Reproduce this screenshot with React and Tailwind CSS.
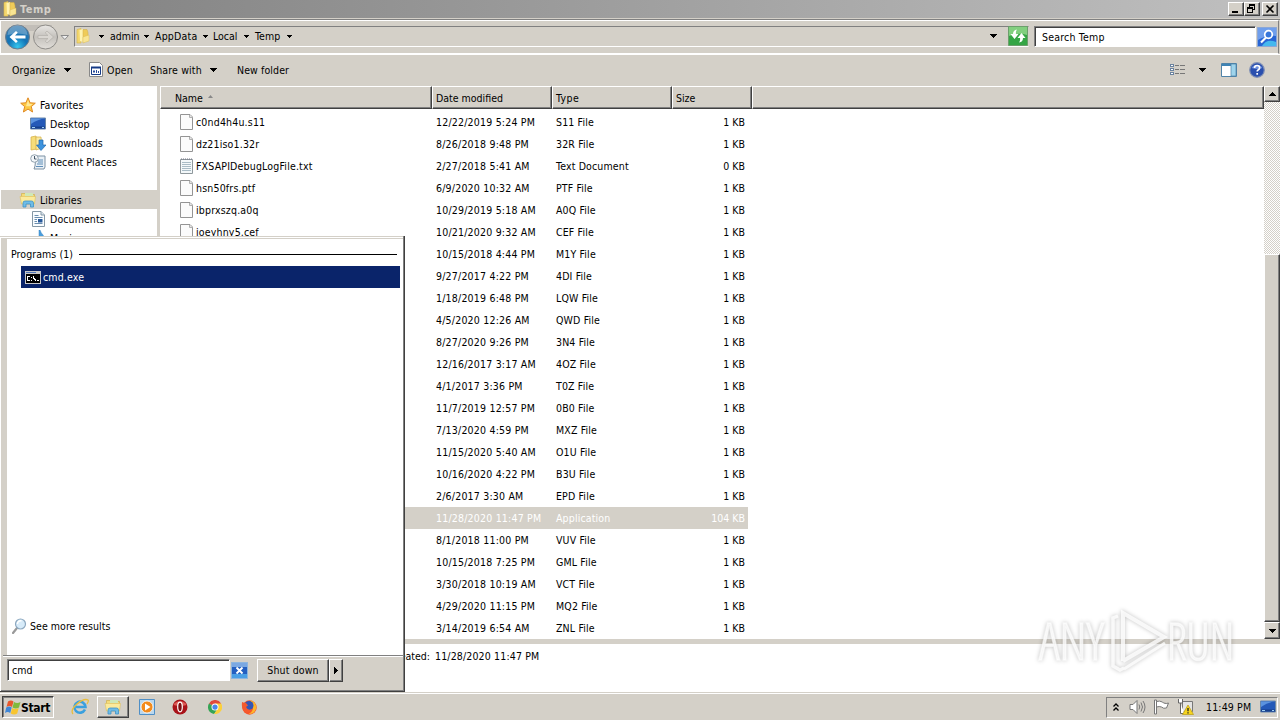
import clsx from "clsx";

const files = [
  ["c0nd4h4u.s11", "12/22/2019 5:24 PM", "S11 File", "1 KB"],
  ["dz21iso1.32r", "8/26/2018 9:48 PM", "32R File", "1 KB"],
  ["FXSAPIDebugLogFile.txt", "2/27/2018 5:41 AM", "Text Document", "0 KB"],
  ["hsn50frs.ptf", "6/9/2020 10:32 AM", "PTF File", "1 KB"],
  ["ibprxszq.a0q", "10/29/2019 5:18 AM", "A0Q File", "1 KB"],
  ["joeyhny5.cef", "10/21/2020 9:32 AM", "CEF File", "1 KB"],
  ["", "10/15/2018 4:44 PM", "M1Y File", "1 KB"],
  ["", "9/27/2017 4:22 PM", "4DI File", "1 KB"],
  ["", "1/18/2019 6:48 PM", "LQW File", "1 KB"],
  ["", "4/5/2020 12:26 AM", "QWD File", "1 KB"],
  ["", "8/27/2020 9:26 PM", "3N4 File", "1 KB"],
  ["", "12/16/2017 3:17 AM", "4OZ File", "1 KB"],
  ["", "4/1/2017 3:36 PM", "T0Z File", "1 KB"],
  ["", "11/7/2019 12:57 PM", "0B0 File", "1 KB"],
  ["", "7/13/2020 4:59 PM", "MXZ File", "1 KB"],
  ["", "11/15/2020 5:40 AM", "O1U File", "1 KB"],
  ["", "10/16/2020 4:22 PM", "B3U File", "1 KB"],
  ["", "2/6/2017 3:30 AM", "EPD File", "1 KB"],
  ["", "11/28/2020 11:47 PM", "Application", "104 KB"],
  ["", "8/1/2018 11:00 PM", "VUV File", "1 KB"],
  ["", "10/15/2018 7:25 PM", "GML File", "1 KB"],
  ["", "3/30/2018 10:19 AM", "VCT File", "1 KB"],
  ["", "4/29/2020 11:15 PM", "MQ2 File", "1 KB"],
  ["", "3/14/2019 6:54 AM", "ZNL File", "1 KB"],
];

const raised =
  "bg-[#d4d0c8] border border-t-white border-l-white border-r-[#404040] border-b-[#404040] shadow-[inset_-1px_-1px_0_#808080]";
const sunken =
  "border border-t-[#808080] border-l-[#808080] border-r-white border-b-white shadow-[inset_1px_1px_0_#404040]";

function Caret({ className }) {
  return (
    <svg width="7" height="4" viewBox="0 0 7 4" shapeRendering="crispEdges" className={clsx("shrink-0", className)}>
      <path d="M0 0h7L3.5 4z" />
    </svg>
  );
}

function SmallCaret({ className }) {
  return (
    <svg width="5" height="3" viewBox="0 0 5 3" shapeRendering="crispEdges" className={clsx("shrink-0", className)}>
      <path d="M0 0h5v1h-1v1h-1v1h-1v-1h-1v-1h-1z" />
    </svg>
  );
}

function FolderIcon() {
  return (
    <svg width="16" height="16" viewBox="0 0 16 16" className="shrink-0">
      <path d="M2 1.500l4-1V15H2z" fill="#f3d76e" stroke="#d8b548" strokeWidth=".6" />
      <path d="M4.500 2l3.500-1 1 8-1 5-3-1z" fill="#fff3b0" />
      <path d="M8 1.500h4l1 3v8l-5 2z" fill="#efcb58" stroke="#d0aa45" strokeWidth=".5" />
      <path d="M8 9l6-2v6l-6 2z" fill="#f9e593" stroke="#d9b954" strokeWidth=".4" />
    </svg>
  );
}

function LibraryIcon({ className }) {
  return (
    <svg width="18" height="16" viewBox="0 0 18 16" className={clsx("shrink-0", className)}>
      <path d="M2.500 1.500h4l1 1h8v9h-13z" fill="#f4db78" stroke="#d0b04d" strokeWidth=".7" />
      <path d="M6 1h8v3H6z" fill="#cfe8b8" />
      <path d="M1 4.500h15.500l-1 7.500h-13z" fill="#fbea9c" stroke="#dcbf60" strokeWidth=".6" />
      <path d="M4 15v-4q0-2 2-2h6.500q2 0 2 2v4h-3v-3H7v3z" fill="#6fbce6" stroke="#3f93c6" strokeWidth=".8" />
    </svg>
  );
}

function FileIcon({ lines }) {
  return (
    <svg width="14" height="16" viewBox="0 0 14 16" className="shrink-0">
      {lines ? (
        <>
          <path d="M.5 1.500h12v14H.5z" fill="#f3f8fa" stroke="#8f989c" />
          <path d="M2 4.500h9M2 6.500h9M2 8.500h9M2 10.500h9M2 12.500h9" stroke="#a9bcc6" />
          <path d="M1 1h11" stroke="#778" strokeDasharray="1 1" />
        </>
      ) : (
        <>
          <path d="M.5.5h9.500l2.500 2.500v12.500H.5z" fill="#fbfbfb" stroke="#949494" />
          <path d="M9.500 1v2.500h3" fill="#e6e6e6" stroke="#b0b0b0" />
        </>
      )}
    </svg>
  );
}

function StarIcon() {
  return (
    <svg width="16" height="16" viewBox="0 0 16 16">
      <path d="M8 .8l2.100 5 5.200.4-4 3.400 1.300 5.400L8 12.100 3.400 15l1.300-5.400-4-3.400 5.200-.4z" fill="#fdc843" stroke="#e08a24" />
      <path d="M8 3l1.300 3.700 3.500.3-3 2.200H6z" fill="#ffe998" />
    </svg>
  );
}

function DesktopIcon({ className }) {
  return (
    <svg width="16" height="14" viewBox="0 0 16 14" className={clsx("shrink-0", className)}>
      <path d="M.5 1h15v11H.5z" fill="#2459b8" stroke="#6a87a8" />
      <path d="M1 7q7-5 14-5.500V1.500H1z" fill="#5b93df" />
      <path d="M1 9.500h14v2H1z" fill="#163f8a" />
      <path d="M2 10.500h3M12 10.500h2" stroke="#9fd0f5" />
    </svg>
  );
}

function DownloadsIcon() {
  return (
    <svg width="16" height="16" viewBox="0 0 16 16">
      <path d="M1 2l5-1 1 13-6 1z" fill="#f6dd7a" stroke="#d3ad43" strokeWidth=".7" />
      <path d="M6 2h5l1 11-6 2z" fill="#fbeaa0" stroke="#d3ad43" strokeWidth=".7" />
      <path d="M9 5h4v5h3l-5 5.500L6.500 10H9z" fill="#3d93de" stroke="#2067ad" strokeWidth=".7" />
    </svg>
  );
}

function RecentIcon() {
  return (
    <svg width="16" height="16" viewBox="0 0 16 16">
      <path d="M6 2h9v11l-1 2H4l1-3z" fill="#e9f0f6" stroke="#7d91a3" />
      <path d="M8 6h5M8 8h5M7 10h6M6 12.500h7" stroke="#5f8eb8" />
      <circle cx="4.500" cy="4.500" r="3.800" fill="#f3f7fa" stroke="#92a2ae" />
      <path d="M4.500 2v3h2" fill="none" stroke="#456" />
    </svg>
  );
}

function DocumentIcon() {
  return (
    <svg width="16" height="16" viewBox="-1.500 0 16 16">
      <path d="M1 .5h8.500l3.500 3.500v11.500H1z" fill="#fafdff" stroke="#8597a5" />
      <path d="M9.500.5v3.500H13" fill="#d9e5ee" stroke="#8597a5" />
      <path d="M3 4.500h4M3 6.500h8M3 8.500h2.500M3 10.500h2.500M3 12.500h8" stroke="#6b8dad" />
      <path d="M6.500 8h4.500v3.500H6.500z" fill="#28599b" />
    </svg>
  );
}

function MusicIcon() {
  return (
    <svg width="16" height="16" viewBox="0 0 16 16">
      <path d="M9 16V0h1q1 3 3 5 2 2 1 5l-3-3v9z" fill="#4a9ddc" stroke="#3585c4" strokeWidth=".5" />
    </svg>
  );
}

function BackForward() {
  return (
    <svg width="66" height="28" viewBox="0 0 66 28" className="shrink-0">
      <defs>
        <radialGradient id="back" cx=".5" cy=".9" r=".9">
          <stop offset="0" stopColor="#35c6ee" />
          <stop offset=".45" stopColor="#1273b6" />
          <stop offset="1" stopColor="#3e7daf" />
        </radialGradient>
        <linearGradient id="fwd" x1="0" y1="0" x2="0" y2="1">
          <stop offset="0" stopColor="#e9e7e4" />
          <stop offset=".5" stopColor="#c4c1bc" />
          <stop offset="1" stopColor="#e2dfda" />
        </linearGradient>
      </defs>
      <path d="M14 2h34v6H14z" fill="#c2beb8" />
      <circle cx="13.500" cy="14" r="12" fill="url(#back)" stroke="#6c7c8b" />
      <path d="M3.500 12a10 10 0 0 1 20 0q-10-3-20 0z" fill="#fff" opacity=".25" />
      <path d="M5.500 14l6.500-6 1.800 1.800L11 12.500h10.500v3H11l2.800 2.700L12 20z" fill="#fff" />
      <circle cx="41.500" cy="14" r="12" fill="url(#fwd)" stroke="#8e8c88" />
      <path d="M49.500 14L43 8l-1.800 1.800 2.800 2.700H34v3h10l-2.800 2.700L43 20z" fill="#d9d6d1" stroke="#b3b0ab" strokeWidth=".7" />
      <path d="M57 12.500h7.500l-3.700 4z" fill="#eee" stroke="#8a8a8a" />
    </svg>
  );
}

function TitleBar() {
  return (
    <div className="flex h-[18px] shrink-0 items-center bg-linear-to-r from-[#808080] to-[#c0c0c0] pr-[2px] pl-[2px]">
      <FolderIcon />
      <span className="ml-[2px] w-[60px] pt-px text-[11px] font-bold tracking-[0.5px] text-[#d4d0c8]">Temp</span>
      <div className="ml-auto flex h-[14px]">
        <div className={clsx("h-[14px] w-[16px]", raised)}>
          <svg width="13" height="12" shapeRendering="crispEdges"><path d="M3 8h6v2H3z" /></svg>
        </div>
        <div className={clsx("h-[14px] w-[16px]", raised)}>
          <svg width="13" height="12" fill="none" stroke="#000" shapeRendering="crispEdges">
            <path d="M4.500 4V1.500h5v5H8M4 2.500h6M2.500 4.500h5v5h-5zM2 5.500h6" />
          </svg>
        </div>
        <div className={clsx("ml-[2px] h-[14px] w-[16px]", raised)}>
          <svg width="14" height="12" stroke="#000" strokeWidth="1.600"><path d="M3.500 2.500l7 7M10.500 2.500l-7 7" /></svg>
        </div>
      </div>
    </div>
  );
}

function AddressBar() {
  return (
    <div className="flex h-[36px] shrink-0 border-t border-b border-t-[#808080] border-b-[#808080] pr-px">
      <div className="flex min-w-0 flex-1 items-center border border-white border-r-[#808080] pr-px pb-px pl-[3px]">
        <BackForward />
        <div className="ml-[4px] flex h-[21px] w-[955px] items-center border border-t-[#808080] border-l-[#808080] border-r-[#d4d0c8] border-b-white pb-px">
          <FolderIcon />
          <SmallCaret className="ml-[8px]" />
          <span className="ml-[6px] w-[34px]">admin</span>
          <SmallCaret />
          <span className="ml-[6px] w-[48px] tracking-[0.2px]">AppData</span>
          <SmallCaret />
          <span className="ml-[5px] w-[31px]">Local</span>
          <SmallCaret />
          <span className="ml-[6px] w-[32px] tracking-[0.1px]">Temp</span>
          <SmallCaret />
          <Caret className="mr-[11px] ml-auto" />
          <svg width="20" height="20" viewBox="0 0 20 20" className="shrink-0">
            <path d="M.5.5h19v19H.5z" fill="#35a545" stroke="#6c9f6c" />
            <path d="M1 1h18v8q-9-3-18 1z" fill="#82cf7f" />
            <path d="M9 3.500Q5 4 5 8H2.500l4 5 4-5H8Q7.500 5.500 9 3.500zM11 16.500q4-.5 4-4.500h2.500l-4-5-4 5H12q.5 2.500-1 4.500z" fill="#fff" />
          </svg>
        </div>
        <div className={clsx("ml-[5px] flex h-[21px] flex-1 items-center bg-white pl-[7px]", sunken)}>
          <span className="tracking-[0.2px]">Search Temp</span>
        </div>
        <svg width="20" height="20" viewBox="0 0 20 20" className="ml-px shrink-0">
          <path d="M.5.5h19v19H.5z" fill="#2865d4" stroke="#8ba7d6" />
          <path d="M1 1h18v8Q9 8 1 13z" fill="#6f9eec" />
          <path d="M5 19q5-8 14-4v4z" fill="#45b8ee" />
          <circle cx="11.500" cy="7.500" r="3.800" fill="#3876da" stroke="#fff" strokeWidth="1.700" />
          <path d="M9 10.500l-5 5" stroke="#fff" strokeWidth="2.200" />
        </svg>
      </div>
    </div>
  );
}

function Toolbar() {
  return (
    <div className="flex h-[32px] shrink-0 items-center border-t border-white pr-[15px] pb-[2px] pl-[12px]">
      <span className="w-[52px] tracking-[0.15px]">Organize</span>
      <Caret />
      <svg width="14" height="15" viewBox="0 0 14 15" className="ml-[18px] shrink-0">
        <path d="M.5.5h10l3 3v11H.5z" fill="#fff" stroke="#888" />
        <path d="M2.500 5.500h9v7h-9z" fill="#fff" stroke="#153a86" />
        <path d="M2 5.500h10" stroke="#153a86" strokeWidth="2" />
        <path d="M4 8.500h2v2H4zM7 8h1v3H7zM9 9h1v2H9z" fill="#294c9c" />
      </svg>
      <span className="ml-[4px] w-[43px] tracking-[0.2px]">Open</span>
      <span className="w-[60px] tracking-[0.15px]">Share with</span>
      <Caret />
      <span className="ml-[20px] tracking-[0.1px]">New folder</span>
      <svg width="16" height="14" viewBox="0 0 16 14" className="ml-auto" fill="none" stroke="#777" shapeRendering="crispEdges">
        <path d="M.5 1.500h3v2h-3zM.5 5.500h3v2h-3zM.5 9.500h3v2h-3z" fill="#fff" stroke="#6b83a0" />
        <path d="M5 2.500h4M10 2.500h5M5 6.500h4M10 6.500h5M5 10.500h4M10 10.500h5" />
      </svg>
      <Caret className="ml-[13px]" />
      <svg width="16" height="14" viewBox="0 0 16 14" className="ml-[15px]">
        <path d="M.5.500h15v13H.5z" fill="#fff" stroke="#4f83a8" />
        <path d="M1 2h9" stroke="#3f84b5" strokeWidth="2" />
        <path d="M10 1h5v12h-5z" fill="#9ed4ec" stroke="#4f83a8" strokeWidth=".7" />
      </svg>
      <svg width="16" height="16" viewBox="0 0 16 16" className="ml-[12px]">
        <circle cx="8" cy="8" r="7.300" fill="#2a4fae" stroke="#8090b5" strokeWidth="1.200" />
        <path d="M2.500 6a6 5 0 0 1 11 0q-5 2-11 0z" fill="#6a8ddd" />
        <path d="M5.500 6q0-2.500 2.600-2.500T10.600 6q0 1.200-1.500 1.900-.9.500-.9 1.600M8.200 11v1.800" fill="none" stroke="#fff" strokeWidth="1.700" />
      </svg>
    </div>
  );
}

function SideItem({ icon, label, child, selected }) {
  return (
    <div className={clsx("ml-px flex h-[19px] items-center", child ? "pl-[29px]" : "pl-[19px]", selected && "bg-[#d4d0c8]")}>
      <span className="flex w-[20px] shrink-0">{icon}</span>
      <span className="whitespace-nowrap tracking-[0.1px]">{label}</span>
    </div>
  );
}

function Sidebar() {
  return (
    <div className="w-[157px] shrink-0 overflow-hidden bg-white pt-[9px]">
      <SideItem icon={<StarIcon />} label="Favorites" />
      <SideItem child icon={<DesktopIcon />} label="Desktop" />
      <SideItem child icon={<DownloadsIcon />} label="Downloads" />
      <SideItem child icon={<RecentIcon />} label="Recent Places" />
      <div className="h-[19px]" />
      <SideItem selected icon={<LibraryIcon className="-ml-px" />} label="Libraries" />
      <SideItem child icon={<DocumentIcon />} label="Documents" />
      <SideItem child icon={<MusicIcon />} label="Music" />
    </div>
  );
}

function HeaderCell({ className, children }) {
  return (
    <div className={clsx("flex h-full items-center border-t border-b border-l border-r border-t-white border-l-white border-r-[#404040] border-b-[#404040] pt-px shadow-[inset_-1px_-1px_0_#808080]", className)}>
      {children}
    </div>
  );
}

function FileList() {
  return (
    <div className="flex min-w-0 flex-1 flex-col bg-white">
      <div className="flex h-[23px] shrink-0 bg-[#d4d0c8]">
        <HeaderCell className="w-[272px] pl-[14px]">
          <span>Name</span>
          <svg width="5" height="3" className="mb-[3px] ml-[5px]"><path d="M0 3h5L2.500 0z" fill="#888" /></svg>
        </HeaderCell>
        <HeaderCell className="w-[120px] pl-[3px]">Date modified</HeaderCell>
        <HeaderCell className="w-[120px] pl-[3px] tracking-[0.4px]">Type</HeaderCell>
        <HeaderCell className="w-[80px] pl-[3px]">Size</HeaderCell>
        <HeaderCell className="flex-1" />
      </div>
      <div className="pt-[2px]">
        {files.map(([name, date, type, size]) => (
          <div
            key={date}
            className={clsx("flex h-[22px] w-[588px] items-center whitespace-nowrap pl-[20px]", type === "Application" && "bg-[#d4d0c8] text-white")}
          >
            <div className="flex w-[256px] items-center gap-[2px]">
              {name && <FileIcon lines={name.endsWith(".txt")} />}
              <span className="tracking-[0.18px]">{name}</span>
            </div>
            <span className="w-[120px] tracking-[0.2px]">{date}</span>
            <span className="w-[120px] tracking-[0.15px]">{type}</span>
            <span className="flex-1 pr-[3px] text-right">{size}</span>
          </div>
        ))}
      </div>
    </div>
  );
}

function ScrollBar() {
  return (
    <div className="flex w-[16px] shrink-0 flex-col bg-[conic-gradient(#fff_25%,#d4d0c8_0_50%,#fff_0_75%,#d4d0c8_0)] bg-size-[2px_2px]">
      <div className={clsx("flex h-[16px] items-center justify-center", raised)}>
        <Caret className="rotate-180" />
      </div>
      <div className={clsx("mt-[152px] h-[368px]", raised)} />
      <div className={clsx("flex h-[17px] items-center justify-center", raised)}>
        <Caret />
      </div>
    </div>
  );
}

function StartMenu() {
  return (
    <div className="absolute top-[236px] left-0 flex h-[456px] w-[405px] flex-col border-r border-b border-[#404040] bg-[#d4d0c8] pt-px shadow-[inset_-1px_-1px_0_#808080]">
      <div className="mr-px mb-px flex flex-1 flex-col border-t border-l border-white pt-px">
        <div className="ml-[6px] flex h-[416px] flex-col bg-white">
          <div className="flex h-[27px] items-center pt-[3px] pr-[6px] pl-[4px]">
            <span className="w-[68px] tracking-[0.08px]">Programs (1)</span>
            <div className="h-px flex-1 bg-black" />
          </div>
          <div className="mr-[3px] ml-[14px] flex h-[22px] items-center bg-[#0a246a] pl-[4px] text-white">
            <svg width="16" height="13" viewBox="0 0 16 13" shapeRendering="crispEdges">
              <path d="M0 0h16v13H0z" fill="#c8c8c8" />
              <path d="M1 1h10v1H1z" fill="#5074b5" />
              <path d="M1 3h14v9H1z" fill="#000" />
              <path d="M5 5.500H2.500v4H5M6.500 6v1M6.500 8.500v1M8.500 5v2l2 2v1M12 9.500h2" fill="none" stroke="#fff" />
            </svg>
            <span className="ml-[2px] tracking-[0.15px]">cmd.exe</span>
          </div>
          <div className="mt-auto mb-[20px] flex h-[19px] items-center pl-[5px]">
            <svg width="15" height="16" viewBox="0 0 15 16">
              <path d="M1 15l4-5" stroke="#9a9a9a" strokeWidth="2.200" strokeLinecap="round" />
              <circle cx="8.500" cy="6" r="5" fill="#d7ebf9" stroke="#8ea9c0" strokeWidth="1.200" />
              <path d="M5.500 6a3 3 0 0 1 4-3" stroke="#fff" strokeWidth="1.500" fill="none" />
            </svg>
            <span className="ml-[3px] tracking-[0.05px]">See more results</span>
          </div>
        </div>
        <div className="ml-[2px] flex h-[36px] border-t border-[#808080]">
          <div className="flex flex-1 border-t border-white pt-[2px] pl-[4px]">
            <div className={clsx("flex h-[22px] w-[223px] items-center bg-white pl-[4px]", sunken)}>cmd</div>
            <svg width="17" height="17" viewBox="0 0 17 17" className="mt-[3px] ml-px">
              <path d="M.5.500h16v16H.5z" fill="#245fc0" stroke="#8db5df" />
              <path d="M1 1h15v4H1z" fill="#7ba8e2" />
              <path d="M1 12h15v4H1z" fill="#4a9fe5" />
              <path d="M5.500 5.500l6 6M11.500 5.500l-6 6" stroke="#fff" strokeWidth="1.900" />
            </svg>
            <div className={clsx("ml-[9px] flex h-[23px] w-[72px] items-center justify-center pb-px tracking-[0.15px]", raised)}>Shut down</div>
            <div className={clsx("flex h-[23px] w-[14px] items-center justify-center pb-px", raised)}>
              <svg width="4" height="7" shapeRendering="crispEdges"><path d="M0 0v7l4-3.500z" /></svg>
            </div>
          </div>
        </div>
      </div>
    </div>
  );
}

function WindowsLogo() {
  return (
    <svg width="16" height="15" viewBox="0 0 16 15" className="shrink-0">
      <path d="M3 1.500q3-2 5.500 0L7 7q-2.500-2-5.500 0z" fill="#e8572c" />
      <path d="M9 2q3 2 6.500 0L14 7.500q-3 2-6.500 0z" fill="#80b93c" />
      <path d="M1.200 7.500q3-2 5.500 0L5.200 13q-2.500-2-5.200 0z" fill="#3f86d6" />
      <path d="M7.200 8q3 2 6.500 0L12.200 13.500q-3 2-6.500 0z" fill="#f8c52e" />
    </svg>
  );
}

function TaskBar() {
  return (
    <div className="flex h-[27px] shrink-0 items-start border-t border-white bg-[#d4d0c8] pt-[2px] pr-[2px] pl-[2px]">
      <div className="flex h-[22px] w-[52px] items-center border border-t-[#404040] border-l-[#404040] border-r-white border-b-white pl-[2px] shadow-[inset_1px_1px_0_#808080]">
        <WindowsLogo />
        <span className="pt-px text-[12px] font-bold tracking-[-0.35px]">Start</span>
      </div>
      <svg width="18" height="18" viewBox="0 0 18 18" className="mt-[2px] ml-[17px]">
        <path d="M14 11.500A5.500 5.500 0 1 1 14.500 9H5" fill="none" stroke="#3aa0de" strokeWidth="2.600" />
        <path d="M2 16Q-1 12 6 6t11-4q1 1-1 4" fill="none" stroke="#e9bd3c" strokeWidth="1.300" />
      </svg>
      <div className={clsx("ml-[8px] flex h-[22px] w-[32px] items-center justify-center", raised)}>
        <LibraryIcon />
      </div>
      <svg width="16" height="16" viewBox="0 0 16 16" className="mt-[3px] ml-[10px]">
        <path d="M.5.5h15v15H.5z" fill="#b9d7ee" stroke="#4f8fc6" />
        <circle cx="8" cy="8" r="6" fill="#f28a1c" stroke="#fff" strokeWidth=".8" />
        <path d="M6 4.500v7l5.500-3.500z" fill="#fff" />
      </svg>
      <svg width="16" height="16" viewBox="0 0 16 16" className="mt-[3px] ml-[17px]">
        <circle cx="8" cy="8" r="7.500" fill="#a81218" />
        <path d="M1.500 6a7 6 0 0 1 13 0q-6 2-13 0z" fill="#dc5a55" />
        <ellipse cx="8" cy="8" rx="2.300" ry="4.800" fill="#7c0c10" stroke="#fff" strokeWidth="1.200" />
      </svg>
      <svg width="14" height="14" viewBox="0 0 16 16" className="mt-[4px] ml-[20px]">
        <path d="M8 8L1.100 4A8 8 0 0 1 15 4z" fill="#e04a3b" />
        <path d="M8 8L1.100 4A8 8 0 0 0 7 16l4-6z" fill="#35a455" />
        <path d="M8 8l3 2-4 6A8 8 0 0 0 15 4H8z" fill="#fbd03c" />
        <circle cx="8" cy="8" r="4" fill="#fff" />
        <circle cx="8" cy="8" r="3" fill="#4a88ea" />
      </svg>
      <svg width="16" height="16" viewBox="0 0 16 16" className="mt-[3px] ml-[19px]">
        <circle cx="8.500" cy="8.500" r="7.200" fill="#f5532b" />
        <path d="M9 1q6 2 6.500 7-1 7-8 7 6-3 4-9z" fill="#fdb52b" />
        <circle cx="8" cy="6.500" r="4.500" fill="#3556b5" />
        <path d="M1 3q2 1 4 1l2 2.500-2 1.500q2 4 6 2-2 5-7 3-4-3-3-10z" fill="#f5592d" />
      </svg>
      <div className="mt-px ml-auto flex h-[21px] w-[172px] items-center border border-t-[#808080] border-l-[#808080] border-r-white border-b-white pb-px pl-[6px]">
        <svg width="6" height="8" fill="none" stroke="#000" strokeWidth="1.300"><path d="M.5 3.500L3 1l2.500 2.500M.5 7.500L3 5l2.500 2.500" /></svg>
        <svg width="17" height="16" viewBox="0 0 17 16" className="ml-[10px]" fill="none" stroke="#777">
          <path d="M1 5.500h3l4-4v13l-4-4H1z" fill="#fff" />
          <path d="M10 5.500q1.500 2.500 0 5M12 3.500q3 4.500 0 9M14 2q4 6 0 12" />
        </svg>
        <svg width="17" height="16" viewBox="0 0 17 16" className="ml-[7px]" stroke="#777">
          <path d="M1.500 1h2v14h-2z" fill="#fff" />
          <path d="M3.500 2.500q3-1 6 .5l1 1q3 1 5 0l-2 5q-3 1-5-1-2-1-5 0z" fill="#fff" />
        </svg>
        <svg width="17" height="16" viewBox="0 0 17 16" className="ml-[7px]">
          <path d="M5.500 2.500h10v10h-10z" fill="#e4e4e4" stroke="#777" />
          <path d="M1.500 0v4h4V0M3.500 4v10.500h4" fill="#fff" stroke="#666" />
          <path d="M11 6l5.500 9.500h-11z" fill="#f7d51d" stroke="#b89b14" strokeWidth=".7" />
          <path d="M11 9v3.300M11 13.200v1.300" stroke="#222" strokeWidth="1.300" />
        </svg>
        <span className="ml-[12px] w-[54px] whitespace-nowrap tracking-[0.15px]">11:49 PM</span>
        <DesktopIcon />
      </div>
    </div>
  );
}

function Watermark() {
  return (
    <svg
      width="220"
      height="90"
      viewBox="0 0 220 90"
      className="absolute top-[596px] left-[1036px] drop-shadow-[0_0_2px_rgba(0,0,0,0.3)]"
      fill="#fff"
      fillOpacity=".75"
    >
      <g fontFamily="Open Sans, Roboto, sans-serif" fontSize="51" fontWeight="300" stroke="#fff" strokeOpacity=".6" strokeWidth="1.500">
        <text x="3" y="64" textLength="65" lengthAdjust="spacingAndGlyphs">ANY</text>
        <text x="131" y="64" textLength="67" lengthAdjust="spacingAndGlyphs">RUN</text>
      </g>
      <g fill="none" stroke="#fff" strokeOpacity=".8" strokeWidth="4">
        <path d="M82 20l-5 2v48l7 4 4-2" strokeWidth="3.500" />
        <path d="M87 65V17l41 24-41 24" />
        <path d="M129 47L88 73" strokeWidth="3" />
      </g>
    </svg>
  );
}

export default function App() {
  return (
    <div className="relative flex h-[720px] w-[1280px] flex-col overflow-hidden bg-[#d4d0c8] font-['DejaVu_Sans_Condensed','DejaVu_Sans',sans-serif] text-[10.5px] leading-[14px] text-black [font-stretch:condensed]">
      <TitleBar />
      <div className="h-px shrink-0" />
      <AddressBar />
      <div className="-mt-px flex flex-col">
        <Toolbar />
      </div>
      <div className="flex h-[553px] shrink-0 overflow-hidden">
        <Sidebar />
        <div className="w-[3px] bg-[#d4d0c8]" />
        <FileList />
        <ScrollBar />
      </div>
      <div className="h-[5px] shrink-0 bg-[#d4d0c8]" />
      <div className="flex h-[48px] shrink-0 bg-white pt-[5px]">
        <span className="w-[430px] text-right">Date created:</span>
        <span className="ml-[5px] tracking-[0.15px]">11/28/2020 11:47 PM</span>
      </div>
      <div className="h-px shrink-0" />
      <TaskBar />
      <StartMenu />
      <Watermark />
    </div>
  );
}
